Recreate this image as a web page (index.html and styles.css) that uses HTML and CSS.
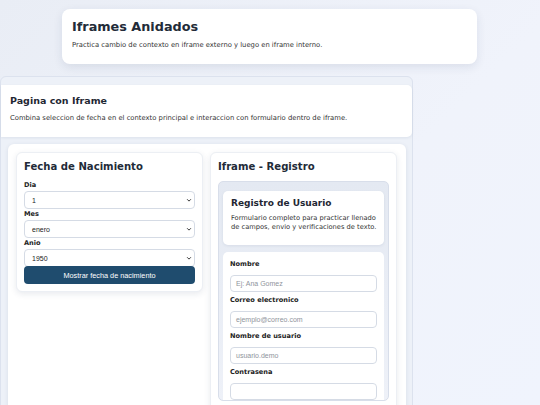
FILE: index.html
```html
<!DOCTYPE html>
<html lang="es">
<head>
<meta charset="utf-8">
<title>Iframes Anidados</title>
<link rel="stylesheet" href="styles.css">
</head>
<body>
<header class="hero">
  <h1>Iframes Anidados</h1>
  <p>Practica cambio de contexto en iframe externo y luego en iframe interno.</p>
</header>
<div class="frame">
  <section class="page-head">
    <h2>Pagina con Iframe</h2>
    <p>Combina seleccion de fecha en el contexto principal e interaccion con formulario dentro de iframe.</p>
  </section>
  <div class="grid">
    <section class="card">
      <h3>Fecha de Nacimiento</h3>
      <label class="lbl">Dia</label>
      <div class="sel"><span>1</span><svg viewBox="0 0 8 8" class="chev"><path d="M1.5 3 L4 5.5 L6.5 3" /></svg></div>
      <label class="lbl">Mes</label>
      <div class="sel"><span>enero</span><svg viewBox="0 0 8 8" class="chev"><path d="M1.5 3 L4 5.5 L6.5 3" /></svg></div>
      <label class="lbl">Anio</label>
      <div class="sel"><span>1950</span><svg viewBox="0 0 8 8" class="chev"><path d="M1.5 3 L4 5.5 L6.5 3" /></svg></div>
      <button class="btn">Mostrar fecha de nacimiento</button>
    </section>
    <section class="card card-right">
      <h3>Iframe - Registro</h3>
      <div class="inner">
        <div class="reg-head">
          <h4>Registro de Usuario</h4>
          <p>Formulario completo para practicar llenado de campos, envio y verificaciones de texto.</p>
        </div>
        <div class="form">
          <label class="flbl">Nombre</label>
          <div class="inp">Ej: Ana Gomez</div>
          <label class="flbl">Correo electronico</label>
          <div class="inp">ejemplo@correo.com</div>
          <label class="flbl">Nombre de usuario</label>
          <div class="inp">usuario.demo</div>
          <label class="flbl">Contrasena</label>
          <div class="inp"></div>
        </div>
      </div>
    </section>
  </div>
</div>
</body>
</html>
```

FILE: styles.css
```css
* { box-sizing: border-box; }
html, body { margin: 0; padding: 0; }
body {
  width: 540px;
  height: 405px;
  overflow: hidden;
  background: linear-gradient(135deg, #e9edf5 0%, #f0f3fb 60%, #f0f4fd 100%);
  font-family: "DejaVu Sans", Verdana, sans-serif;
  color: #1f2937;
}
.hero {
  width: 415px;
  margin: 9px 0 0 62px;
  height: 55px;
  background: #fff;
  border-radius: 8px;
  box-shadow: 0 3px 10px rgba(30, 50, 90, 0.10);
  padding: 10px 10px 0 10px;
}
.hero h1 {
  margin: 0;
  font-size: 12.8px;
  font-weight: bold;
  color: #222b38;
  line-height: 16px;
}
.hero p {
  margin: 6px 0 0 0;
  font-size: 6.8px;
  line-height: 9px;
  color: #333;
}
.frame {
  width: 413px;
  margin-top: 12px;
  height: 340px;
  border: 1px solid #dce2ee;
  border-radius: 6px;
  background: #edf1f8;
  padding-top: 8px;
}
.page-head {
  width: 411px;
  height: 52px;
  background: #fff;
  border-radius: 0 5px 5px 0;
  box-shadow: 0 1px 3px rgba(30, 50, 90, 0.08);
  padding: 9px 9px 0 9px;
}
.page-head h2 {
  margin: 0;
  font-size: 9.5px;
  font-weight: bold;
  color: #1f2733;
  line-height: 14px;
}
.page-head p {
  margin: 6px 0 0 0;
  font-size: 6.8px;
  line-height: 9px;
  color: #333;
}
.grid {
  margin: 7px 0 0 7px;
  width: 398px;
  height: 275px;
  background: #fff;
  border-radius: 6px;
  box-shadow: 0 1px 4px rgba(30, 50, 90, 0.10);
  padding: 8px 8px 0 8px;
  display: flex;
  gap: 7px;
  align-items: flex-start;
}
.card {
  width: 187px;
  background: #fff;
  border: 1px solid #eceff4;
  border-radius: 6px;
  box-shadow: 0 2px 6px rgba(30, 50, 90, 0.10);
  padding: 6px 7px 7px 7px;
}
.card h3 {
  margin: 0 0 6px 0;
  font-size: 10.1px;
  font-weight: bold;
  color: #222b38;
  line-height: 16px;
}
.lbl {
  display: block;
  font-size: 6.6px;
  font-weight: bold;
  color: #222;
  line-height: 9px;
  margin-bottom: 1px;
}
.sel {
  height: 18px;
  border: 1px solid #d5dbe5;
  border-radius: 4px;
  background: #fff;
  display: flex;
  align-items: center;
  justify-content: space-between;
  padding: 0 2px 0 7px;
  font-family: "Liberation Sans", Arial, sans-serif;
  font-size: 7px;
  color: #222;
  margin-bottom: 1px;
}
.chev { width: 6px; height: 6px; }
.chev path { fill: none; stroke: #333; stroke-width: 1.3; }
.btn {
  display: block;
  width: 100%;
  height: 18px;
  margin-top: -2px;
  border: none;
  border-radius: 4px;
  background: #1f4c6e;
  color: #fff;
  font-family: "Liberation Sans", Arial, sans-serif;
  font-size: 7.3px;
  padding: 0;
}
.card-right {
  height: 270px;
  padding: 6px 7px 0 7px;
}
.inner {
  height: 220px;
  border: 1px solid #d8deea;
  border-radius: 5px;
  background: linear-gradient(180deg, #e4e9f2 0%, #eef1f8 100%);
  padding: 9px 4px 0 4px;
  overflow: hidden;
}
.reg-head {
  background: #fff;
  border-radius: 5px;
  height: 54px;
  padding: 6px 3px 0 8px;
  box-shadow: 0 1px 3px rgba(30, 50, 90, 0.08);
}
.reg-head h4 {
  margin: 0;
  font-size: 9px;
  font-weight: bold;
  color: #1f2733;
  line-height: 13px;
}
.reg-head p {
  margin: 4px 0 0 0;
  font-size: 6.7px;
  line-height: 8.5px;
  color: #333;
}
.form {
  margin-top: 7px;
  background: #fff;
  border-radius: 5px;
  height: 160px;
  padding: 8px 7px 0 7px;
}
.flbl {
  display: block;
  font-size: 6.6px;
  font-weight: bold;
  color: #222;
  line-height: 9px;
  margin-bottom: 6px;
}
.inp {
  height: 17px;
  border: 1px solid #d5dbe5;
  border-radius: 4px;
  background: #fff;
  font-family: "Liberation Sans", Arial, sans-serif;
  font-size: 7px;
  color: #8f949c;
  display: flex;
  align-items: center;
  padding-left: 5px;
  margin-bottom: 4px;
}
```
